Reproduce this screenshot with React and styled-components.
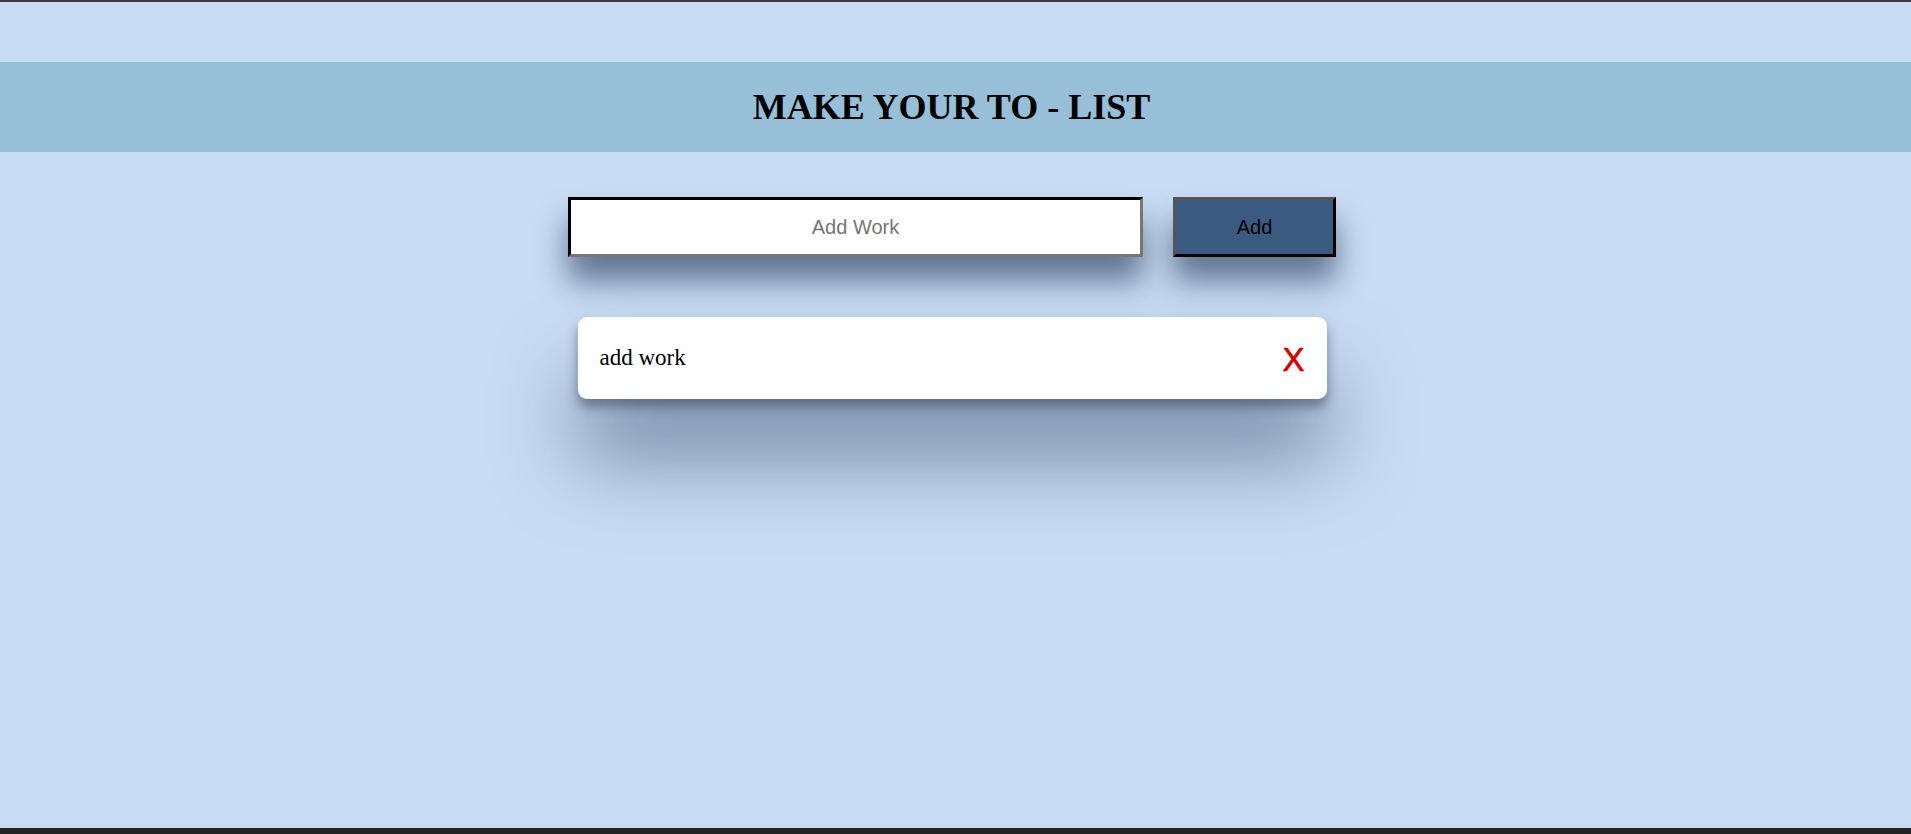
import React, { useState } from 'react';
import styled, { createGlobalStyle } from 'styled-components';

const GlobalStyle = createGlobalStyle`
  html, body {
    margin: 0;
    padding: 0;
    background-color: #c8dcf4;
  }
  * {
    box-sizing: border-box;
  }
`;

const Page = styled.div`
  min-height: 100vh;
  background-color: #c8dcf4;
  border-top: 2px solid #3f3540;
  border-bottom: 6px solid #232323;
  padding-top: 60px;
  font-family: "Liberation Serif", "Times New Roman", serif;
`;

const Header = styled.header`
  height: 90px;
  background-color: #97bfd8;
  display: flex;
  align-items: center;
  justify-content: center;
`;

const Title = styled.h1`
  margin: 0;
  font-size: 36px;
  font-weight: 700;
  color: #000;
  padding-right: 8px;
`;

const Form = styled.form`
  display: flex;
  justify-content: center;
  gap: 30px;
  margin-top: 45px;
  padding-right: 7px;
`;

const Input = styled.input`
  width: 575px;
  height: 60px;
  border: 3px inset #777;
  border-top-color: #222;
  border-left-color: #222;
  background: #fff;
  text-align: center;
  font-family: "Liberation Sans", Arial, sans-serif;
  font-size: 20px;
  outline: none;
  box-shadow: 0 24px 30px rgba(30, 50, 80, 0.6);

  &::placeholder {
    color: #757575;
  }
`;

const Button = styled.button`
  width: 163px;
  height: 60px;
  border: 3px solid #000;
  border-top-color: #555;
  border-left-color: #555;
  background-color: #3b5a80;
  color: #000;
  font-family: "Liberation Sans", Arial, sans-serif;
  font-size: 20px;
  cursor: pointer;
  box-shadow: 0 24px 30px rgba(30, 50, 80, 0.6);
`;

const List = styled.ul`
  list-style: none;
  margin: 60px 0 0;
  padding: 0 7px 0 0;
  display: flex;
  flex-direction: column;
  align-items: center;
`;

const Item = styled.li`
  width: 749px;
  height: 82px;
  background: #fff;
  border-radius: 9px;
  display: flex;
  align-items: center;
  justify-content: space-between;
  padding: 0 22px;
  font-size: 23px;
  box-shadow: 0 8px 12px rgba(30, 40, 60, 0.45), 0 60px 80px rgba(40, 60, 90, 0.5);
`;

const Remove = styled.span`
  font-family: "Liberation Sans", Arial, sans-serif;
  font-size: 33px;
  font-weight: 500;
  color: #d40000;
  cursor: pointer;
  line-height: 1;
  margin-top: 2px;
  -webkit-text-stroke: 0.6px #d40000;
`;

export default function App() {
  const [text, setText] = useState('');
  const [items, setItems] = useState(['add work']);

  const add = (e) => {
    e.preventDefault();
    if (!text.trim()) return;
    setItems([...items, text]);
    setText('');
  };

  return (
    <Page>
      <GlobalStyle />
      <Header>
        <Title>MAKE YOUR TO - LIST</Title>
      </Header>
      <Form onSubmit={add}>
        <Input
          placeholder="Add Work"
          value={text}
          onChange={(e) => setText(e.target.value)}
        />
        <Button type="submit">Add</Button>
      </Form>
      <List>
        {items.map((item, i) => (
          <Item key={i}>
            {item}
            <Remove onClick={() => setItems(items.filter((_, j) => j !== i))}>X</Remove>
          </Item>
        ))}
      </List>
    </Page>
  );
}
